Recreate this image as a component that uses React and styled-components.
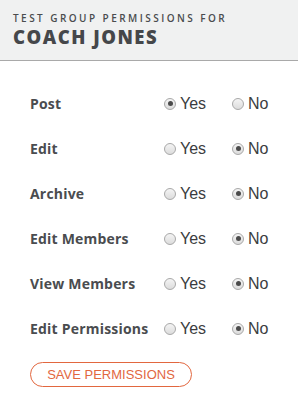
import React from "react";
import styled, { createGlobalStyle } from "styled-components";

const Global = createGlobalStyle`
  html, body { margin: 0; padding: 0; background: #fff; }
  body { font-family: "Liberation Sans", Arial, sans-serif; }
  * { box-sizing: border-box; }
`;

const Header = styled.header`
  background: #f0f1f1;
  border-bottom: 1px solid #a9a9a9;
  height: 61px;
  padding: 13px 13px 0;
`;

const Subtitle = styled.div`
  font-family: "Open Sans", "Noto Sans", sans-serif;
  font-weight: 600;
  font-size: 10px;
  letter-spacing: 2.45px;
  color: #4a4c4e;
  line-height: 11px;
`;

const Title = styled.h1`
  margin: 3px 0 0;
  font-family: "Open Sans", "Noto Sans", sans-serif;
  font-weight: 800;
  font-size: 18.5px;
  letter-spacing: 1.5px;
  line-height: 20px;
  color: #45474a;
`;

const Form = styled.form`
  padding: 20px 0 0 30px;
`;

const Row = styled.div`
  display: grid;
  grid-template-columns: 134px 68px auto;
  align-items: center;
  height: 45px;
`;

const Label = styled.div`
  font-family: "Open Sans", "Noto Sans", sans-serif;
  font-weight: 700;
  font-size: 14px;
  letter-spacing: 0.2px;
  color: #4a4c4f;
`;

const Option = styled.label`
  display: flex;
  align-items: center;
  gap: 4px;
  font-family: "Liberation Sans", Arial, sans-serif;
  font-size: 16px;
  color: #3b3d40;
`;

const Radio = styled.span`
  width: 12px;
  height: 12px;
  border-radius: 50%;
  border: 1px solid #a8a8a8;
  background: linear-gradient(#f4f4f4, #dcdcdc);
  display: flex;
  align-items: center;
  justify-content: center;
  flex: none;
  &::after {
    content: "";
    width: 5px;
    height: 5px;
    border-radius: 50%;
    background: #4a4a4a;
    display: ${(p) => (p.$checked ? "block" : "none")};
  }
`;

const SaveButton = styled.button`
  margin-top: 11px;
  width: 162px;
  height: 25px;
  border: 1px solid #e2673f;
  border-radius: 13px;
  background: #fff;
  color: #e2673f;
  font-family: "Liberation Sans", Arial, sans-serif;
  font-size: 13px;
  padding: 0;
  cursor: pointer;
`;

const perms = [
  ["Post", true],
  ["Edit", false],
  ["Archive", false],
  ["Edit Members", false],
  ["View Members", false],
  ["Edit Permissions", false],
];

export default function App() {
  return (
    <>
      <Global />
      <Header>
        <Subtitle>TEST GROUP PERMISSIONS FOR</Subtitle>
        <Title>COACH JONES</Title>
      </Header>
      <Form onSubmit={(e) => e.preventDefault()}>
        {perms.map(([name, yes]) => (
          <Row key={name}>
            <Label>{name}</Label>
            <Option>
              <Radio $checked={yes} />
              Yes
            </Option>
            <Option>
              <Radio $checked={!yes} />
              No
            </Option>
          </Row>
        ))}
        <SaveButton type="submit">SAVE PERMISSIONS</SaveButton>
      </Form>
    </>
  );
}
